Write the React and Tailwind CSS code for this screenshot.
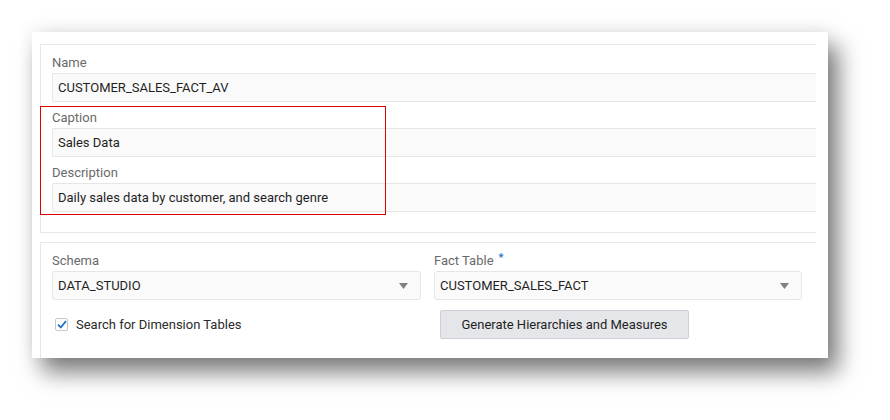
import React from "react";

const Field = ({ label, value }) => (
  <div>
    <div className="h-[26px] flex items-end pb-[2px] text-[13px] text-[#6a6a6a] leading-4">{label}</div>
    <div className="h-[29px] flex items-center pl-[5px] bg-[#fafafa] border-y border-l border-[#e6e6e6] rounded-l-[2px] text-[13px] text-[#1f1f1f]">
      {value}
    </div>
  </div>
);

const Select = ({ value, width }) => (
  <div
    className={`h-[29px] flex items-center justify-between pl-[5px] pr-[12px] bg-[#fafafa] border border-[#e6e6e6] rounded-[3px] text-[13px] text-[#1f1f1f] ${width}`}
  >
    <span>{value}</span>
    <svg width="9" height="6" viewBox="0 0 9 6">
      <path d="M0 0h9L4.5 6z" fill="#808080" />
    </svg>
  </div>
);

export default function App() {
  return (
    <div
      className="w-[890px] h-[420px] bg-white overflow-hidden pt-[32px] pl-[32px]"
      style={{ fontFamily: 'Roboto, "Liberation Sans", Arial, sans-serif' }}
    >
      <div className="w-[796px] h-[326px] bg-white overflow-hidden pl-[8px] pt-[12px] shadow-[10px_14px_22px_rgba(0,0,0,0.52),0_-4px_16px_rgba(0,0,0,0.06)]">
        {/* Names panel */}
        <div className="relative w-[776px] border-y border-l border-[#e8e8e8] pl-[11px] pt-[2px] pb-[20px]">
          <Field label="Name" value="CUSTOMER_SALES_FACT_AV" />
          <Field label="Caption" value="Sales Data" />
          <Field label="Description" value="Daily sales data by customer, and search genre" />
          {/* highlight box */}
          <div className="absolute left-[-1px] top-[61px] w-[346px] h-[109px] border border-[#e00000]" />
        </div>

        {/* Source panel */}
        <div className="mt-[9px] w-[776px] h-[200px] border-t border-l border-[#e8e8e8] pl-[11px] pt-[2px]">
          <div className="flex gap-[13px]">
            <div>
              <div className="h-[26px] flex items-end pb-[2px] text-[13px] text-[#6a6a6a] leading-4">Schema</div>
              <Select value="DATA_STUDIO" width="w-[369px]" />
            </div>
            <div>
              <div className="h-[26px] flex items-end pb-[2px] text-[13px] text-[#6a6a6a] leading-4">
                Fact Table
                <span className="ml-[5px] text-[#1f6fc5] text-[11px] font-bold relative top-[-6px] leading-none">*</span>
              </div>
              <Select value="CUSTOMER_SALES_FACT" width="w-[368px]" />
            </div>
          </div>
          <div className="flex mt-[10px]">
            <label className="w-[388px] flex items-center h-[29px] pl-[3px] gap-[8px] text-[13px] text-[#2a2a2a]">
              <span className="w-[13px] h-[13px] border border-[#c8c8c8] rounded-[2px] bg-white flex items-center justify-center">
                <svg width="10" height="9" viewBox="0 0 10 9">
                  <path d="M1 4.6l2.8 2.8L9 1.2" fill="none" stroke="#1f74cc" strokeWidth="1.8" />
                </svg>
              </span>
              Search for Dimension Tables
            </label>
            <button className="w-[249px] h-[29px] bg-[#e4e6e9] border border-[#cdd0d4] rounded-[2px] text-[13px] text-[#1f1f1f]">
              Generate Hierarchies and Measures
            </button>
          </div>
        </div>
      </div>
    </div>
  );
}
